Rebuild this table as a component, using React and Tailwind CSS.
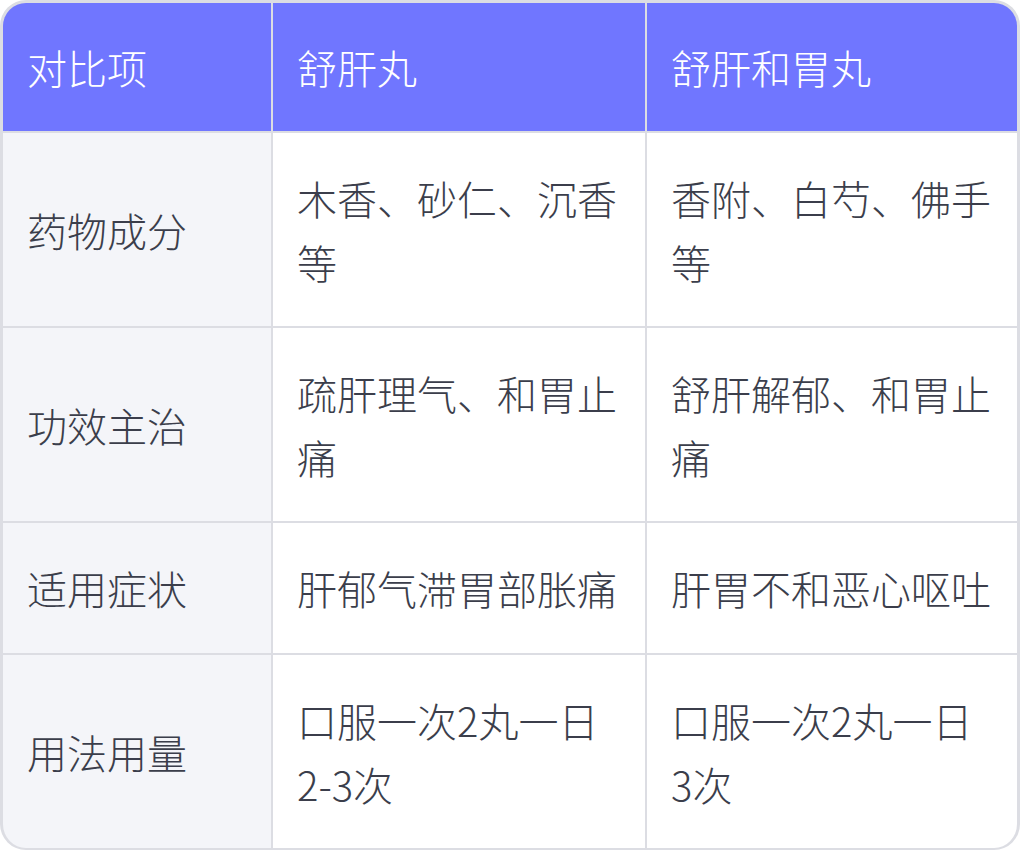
import React from 'react';

const headers = ['对比项', '舒肝丸', '舒肝和胃丸'];

const rows = [
  { label: '药物成分', a: ['木香、砂仁、沉香', '等'], b: ['香附、白芍、佛手', '等'] },
  { label: '功效主治', a: ['疏肝理气、和胃止', '痛'], b: ['舒肝解郁、和胃止', '痛'] },
  { label: '适用症状', a: ['肝郁气滞胃部胀痛'], b: ['肝胃不和恶心呕吐'] },
  { label: '用法用量', a: ['口服一次2丸一日', '2-3次'], b: ['口服一次2丸一日', '3次'] },
];

const font = { fontFamily: '"Noto Sans CJK SC", "Noto Sans", sans-serif' };

function Lines({ lines }) {
  return lines.map((l, i) => (
    <span key={i} className="block whitespace-nowrap">{l}</span>
  ));
}

export default function App() {
  return (
    <div className="w-[1020px] h-[850px] bg-white" style={font}>
      <div className="grid grid-cols-[268px_372px_1fr] grid-rows-[128px_193px_193px_130px_193px] gap-[2px] bg-[#dcdde3] border-[3px] border-b-2 border-[#dcdde3] rounded-[26px] overflow-hidden text-[40px] leading-[64px] font-light">
        {headers.map((h) => (
          <div key={h} className="bg-[#7076ff] text-white px-6 flex items-center">
            {h}
          </div>
        ))}

        {rows.map((r) => (
          <React.Fragment key={r.label}>
            <div className="bg-[#f4f5f9] text-[#3b3e4b] px-6 flex items-center">
              {r.label}
            </div>
            <div className="bg-white text-[#3b3e4b] px-6 flex flex-col justify-center">
              <Lines lines={r.a} />
            </div>
            <div className="bg-white text-[#3b3e4b] px-6 flex flex-col justify-center">
              <Lines lines={r.b} />
            </div>
          </React.Fragment>
        ))}
      </div>
    </div>
  );
}
